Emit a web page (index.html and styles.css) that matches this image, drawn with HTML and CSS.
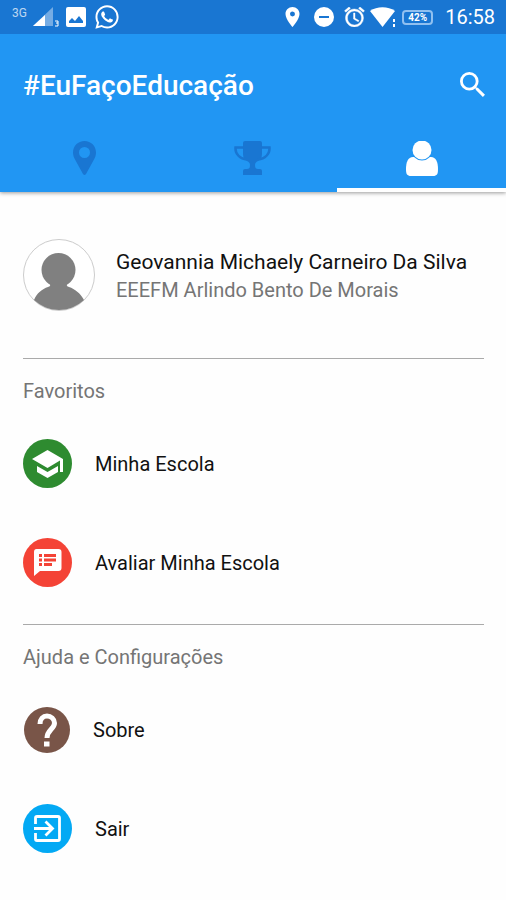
FILE: index.html
```
<!DOCTYPE html>
<html lang="pt-BR">
<head>
    <meta charset="UTF-8">
    <meta name="viewport" content="width=device-width, initial-scale=1.0">
    <title>#EuFaçoEducação</title>
    <link rel="stylesheet" href="styles.css">
</head>
<body>
    <header class="header">
        <div class="status-bar">
            <div class="status-group">
                <span class="network">3G</span>
                <svg class="signal" width="27" height="20" viewBox="0 0 27 20">
                    <path d="M0 19L20 0v19z" fill="#fff" opacity=".4"/>
                    <path d="M0 19L12 8v11z" fill="#fff"/>
                    <path d="M22 14h3v5h-3M23 16h2" fill="none" stroke="#fff"/>
                </svg>
                <svg class="picture" width="20" height="20" viewBox="0 0 20 20">
                    <rect width="20" height="20" rx="2" fill="#fff"/>
                    <path d="M3 16v-2l3-3 3 3 4-5 4 5v2z" fill="#1976d2"/>
                </svg>
                <svg width="28" height="28" viewBox="0 0 24 24" fill="#fff">
                    <path d="M12.04 2C6.58 2 2.13 6.45 2.13 11.91c0 1.75.46 3.45 1.32 4.95L2.05 22l5.25-1.38c1.45.79 3.08 1.21 4.74 1.21 5.46 0 9.91-4.45 9.91-9.91 0-2.65-1.03-5.14-2.9-7.01A9.816 9.816 0 0 0 12.04 2m.01 1.67c2.2 0 4.26.86 5.82 2.42a8.225 8.225 0 0 1 2.41 5.83c0 4.54-3.7 8.23-8.24 8.23-1.48 0-2.93-.39-4.19-1.15l-.3-.17-3.12.82.83-3.04-.2-.32a8.188 8.188 0 0 1-1.26-4.38c.01-4.54 3.7-8.24 8.25-8.24M8.53 7.33c-.16 0-.43.06-.66.31-.22.25-.87.86-.87 2.07 0 1.22.89 2.39 1 2.56.14.17 1.76 2.67 4.25 3.73.59.27 1.05.42 1.41.53.59.19 1.13.16 1.56.1.48-.07 1.46-.6 1.67-1.18.21-.58.21-1.07.15-1.18-.07-.1-.23-.16-.48-.27-.25-.14-1.47-.74-1.69-.82-.23-.08-.37-.12-.56.12-.16.25-.64.81-.78.97-.15.17-.29.19-.53.07-.26-.13-1.06-.39-2-1.23-.74-.66-1.23-1.47-1.38-1.72-.12-.24-.01-.39.11-.5.11-.11.27-.29.37-.44.13-.14.17-.25.25-.41.08-.17.04-.31-.02-.43-.06-.11-.56-1.35-.77-1.84-.2-.48-.4-.42-.56-.43z"/>
                </svg>
            </div>
            <div class="status-group status-right">
                <svg class="pin" width="15" height="20" viewBox="5 2 14 20" fill="#fff">
                    <path d="M12 2C8.13 2 5 5.13 5 9c0 5.25 7 13 7 13s7-7.75 7-13c0-3.87-3.13-7-7-7zm0 9.5a2.5 2.5 0 0 1 0-5 2.5 2.5 0 0 1 0 5z"/>
                </svg>
                <svg class="dnd" width="20" height="20" viewBox="0 0 20 20">
                    <circle cx="10" cy="10" r="10" fill="#fff"/>
                    <path d="M5 10h10" stroke="#1976d2" stroke-width="2"/>
                </svg>
                <svg width="21" height="20" viewBox="2 2 20 20" fill="#fff" stroke="#fff" stroke-width=".4">
                    <path d="M22 5.72l-4.6-3.86-1.29 1.53 4.6 3.86L22 5.72zM7.88 3.39L6.6 1.86 2 5.71l1.29 1.53 4.59-3.85zM12.5 8H11v6l4.75 2.85.75-1.23-4-2.37V8zM12 4c-4.97 0-9 4.03-9 9s4.02 9 9 9a9 9 0 0 0 0-18zm0 16c-3.87 0-7-3.13-7-7s3.13-7 7-7 7 3.13 7 7-3.13 7-7 7z"/>
                </svg>
                <svg width="27" height="20" viewBox="0 0 27 20" fill="#fff">
                    <path d="M0 4C7-1 18-1 25 4L12.5 20z"/>
                    <path d="M21 11h5v9h-5z" fill="#1976d2"/>
                    <path d="M23 12h2v3h-2zM23 17h2v3h-2z"/>
                </svg>
                <span class="battery">42%</span>
                <time class="clock">16:58</time>
            </div>
        </div>
        <div class="app-bar">
            <h1>#EuFaçoEducação</h1>
            <button class="search" type="button" aria-label="Buscar">
                <svg width="25" height="25" viewBox="3 3 17.5 17.5" fill="#fff">
                    <path d="M15.5 14h-.79l-.28-.27A6.471 6.471 0 0 0 16 9.5 6.5 6.5 0 1 0 9.5 16c1.61 0 3.09-.59 4.23-1.57l.27.28v.79l5 4.99L20.49 19l-4.99-5zm-6 0C7.01 14 5 11.99 5 9.5S7.01 5 9.5 5 14 7.01 14 9.5 11.99 14 9.5 14z"/>
                </svg>
            </button>
        </div>
        <nav class="tabs">
            <a href="#mapa" class="tab" aria-label="Mapa">
                <svg width="23" height="34" viewBox="0 0 23 34" fill="#1976d2">
                    <path d="M11.5 0C5 0 0 5 0 11.5c0 3 1 5 2 7L10 33q1.5 2 3 0l8-14.5c1-2 2-4 2-7C23 5 18 0 11.5 0zm0 6a5.5 5.5 0 0 1 0 11 5.5 5.5 0 0 1 0-11z"/>
                </svg>
            </a>
            <a href="#ranking" class="tab" aria-label="Ranking">
                <svg width="37" height="34" viewBox="0 0 37 34" fill="#1976d2">
                    <path d="M9 2q0-2 2-2h15q2 0 2 2v11c0 4-2 6-4 7-2 1-3 2-3 4 0 3 1 4 3 4h2q2 0 2 2v4H9v-4q0-2 2-2h2c2 0 3-1 3-4 0-2-1-3-3-4-2-1-4-3-4-7z"/>
                    <path d="M10 6.5H1.5C1 13 6 18 13 18.500M27 6.5h8.500C36 13 31 18 24 18.500" fill="none" stroke="#1976d2" stroke-width="2.5"/>
                </svg>
            </a>
            <a href="#perfil" class="tab active" aria-label="Perfil" aria-current="page">
                <svg width="32" height="35" viewBox="0 0 32 35" fill="#fff">
                    <path d="M7 16C2 16 0 21 0 28c0 5 1 7 5 7h22c4 0 5-2 5-7 0-7-2-12-7-12z"/>
                    <circle cx="16" cy="9" r="9.5" stroke="#2196f3" stroke-width="2" paint-order="stroke"/>
                </svg>
            </a>
        </nav>
    </header>

    <main class="content">
        <section class="profile">
            <svg class="avatar" width="72" height="72" viewBox="0 0 72 72">
                <circle cx="36" cy="36" r="35.5" fill="#fff" stroke="#ccc"/>
                <circle cx="35.5" cy="31" r="17" fill="#808080"/>
                <path d="M26 43q3 4-1 5c-6 2-11 6-14 13a36 36 0 0 0 50 0C57 54 52 50 46 48q-4-1-1-5z" fill="#808080"/>
            </svg>
            <div class="person">
                <p class="name">Geovannia Michaely Carneiro Da Silva</p>
                <p class="school">EEEFM Arlindo Bento De Morais</p>
            </div>
        </section>

        <section class="group">
            <h2>Favoritos</h2>
            <a href="#escola" class="item">
                <svg width="49" height="49" viewBox="0 0 49 49">
                    <circle cx="24.5" cy="24.5" r="24.5" fill="#2e8b30"/>
                    <path d="M14 27v6l10.500 6L35 33v-6l-10.500 6zM24.500 11L9 20l15.500 9L37 21.500V33h3V20z" fill="#fff"/>
                </svg>
                <span>Minha Escola</span>
            </a>
            <a href="#avaliar" class="item">
                <svg width="49" height="49" viewBox="0 0 49 49">
                    <circle cx="24.5" cy="24.5" r="24.5" fill="#f44336"/>
                    <path d="M13.5 11h22q3 0 3 3v16q0 3-3 3H17l-6 5V14q0-3 2.500-3z" fill="#fff"/>
                    <path d="M16 17.5h3M21 17.5h12M16 22h3M21 22h12M16 26.500h3M21 26.500h8" stroke="#f44336" stroke-width="3"/>
                </svg>
                <span>Avaliar Minha Escola</span>
            </a>
        </section>

        <section class="group">
            <h2>Ajuda e Configurações</h2>
            <a href="#sobre" class="item about">
                <svg width="46" height="46" viewBox="0 0 46 46">
                    <circle cx="23" cy="23" r="23" fill="#795548"/>
                    <path d="M16 17c0-5 3-8 7-8s7.500 3 7.500 7c0 6-7.500 7-7.500 15" fill="none" stroke="#fff" stroke-width="5"/>
                    <path d="M20 34.5h5.500v5H20z" fill="#fff"/>
                </svg>
                <span>Sobre</span>
            </a>
            <a href="#sair" class="item">
                <svg width="49" height="49" viewBox="0 0 49 49">
                    <circle cx="24.5" cy="24.5" r="24.5" fill="#03a9f4"/>
                    <path d="M12.5 20v-6q0-1.500 1.500-1.500h21q1.500 0 1.500 1.500v21q0 1.500-1.500 1.500H14q-1.500 0-1.500-1.500v-6M11 24.500h18M22.500 17.500l7 7-7 7" fill="none" stroke="#fff" stroke-width="2.800"/>
                </svg>
                <span>Sair</span>
            </a>
        </section>
    </main>
</body>
</html>
```

FILE: styles.css
```
body {
    margin: 0;
    background: #fefefe;
    color: #111;
    font-family: Roboto, sans-serif;
    font-size: 20px;
}

svg {
    display: block;
    flex-shrink: 0;
}

a {
    color: inherit;
    text-decoration: none;
}

h1, h2, p {
    margin: 0;
}

.header {
    background: #2196f3;
    color: #fff;
    box-shadow: 0 1px 4px rgba(0, 0, 0, 0.4);
}

.status-bar {
    display: flex;
    justify-content: space-between;
    align-items: center;
    height: 34px;
    padding: 0 11px 0 12px;
    background: #1976d2;
}

.status-group {
    display: flex;
    align-items: center;
}

.network {
    align-self: flex-start;
    width: 21px;
    font-size: 12px;
    line-height: 20px;
    opacity: 0.7;
}

.picture {
    margin: 0 7px 0 6px;
}

.status-right {
    gap: 5px;
}

.pin {
    margin-right: 9px;
}

.dnd {
    margin-right: 5px;
}

.battery {
    box-sizing: border-box;
    width: 31px;
    border: 2px solid #90c0f0;
    border-radius: 4px;
    font-size: 10px;
    font-weight: 700;
    line-height: 11px;
    text-align: center;
}

.clock {
    margin-left: 7px;
    font-size: 20px;
    line-height: 36px;
}

.app-bar {
    display: flex;
    justify-content: space-between;
    align-items: center;
    height: 100px;
    padding: 0 21px 0 23px;
}

h1 {
    padding-top: 4px;
    font-size: 28px;
    font-weight: 500;
    line-height: 36px;
}

.search {
    padding: 0;
    border: none;
    background: none;
    cursor: pointer;
}

.tabs {
    display: grid;
    grid-template-columns: repeat(3, 1fr);
}

.tab {
    display: flex;
    justify-content: center;
    align-items: center;
    height: 48px;
    padding-bottom: 6px;
    border-bottom: 4px solid transparent;
}

.tab.active {
    border-color: #fff;
}

.content {
    padding: 0 22px 0 23px;
}

.profile {
    display: flex;
    align-items: center;
    gap: 21px;
    padding: 47px 0;
}

.person {
    padding-top: 2px;
    line-height: 28px;
}

.name {
    font-size: 21px;
}

.school, h2 {
    color: #757575;
}

.group {
    padding-bottom: 12px;
    border-top: 1px solid #aaa;
}

h2 {
    padding: 20px 0 11px;
    font-size: 20px;
    font-weight: 400;
    line-height: 24px;
}

.item {
    display: flex;
    align-items: center;
    gap: 23px;
    height: 99px;
}

.about {
    padding-left: 1px;
}
```
